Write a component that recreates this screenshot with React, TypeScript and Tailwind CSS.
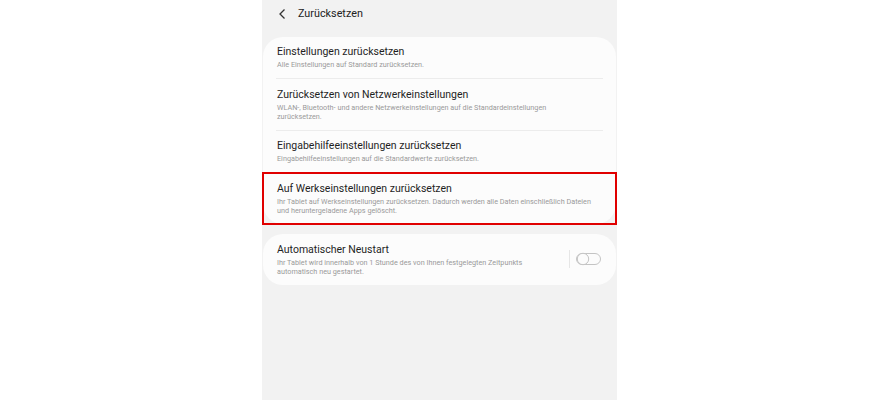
import React from "react";

type Row = { title: string; lines: string[]; highlight?: boolean };

const rows: Row[] = [
  { title: "Einstellungen zurücksetzen", lines: ["Alle Einstellungen auf Standard zurücksetzen."] },
  {
    title: "Zurücksetzen von Netzwerkeinstellungen",
    lines: ["WLAN-, Bluetooth- und andere Netzwerkeinstellungen auf die Standardeinstellungen", "zurücksetzen."],
  },
  { title: "Eingabehilfeeinstellungen zurücksetzen", lines: ["Eingabehilfeeinstellungen auf die Standardwerte zurücksetzen."] },
  {
    title: "Auf Werkseinstellungen zurücksetzen",
    lines: [
      "Ihr Tablet auf Werkseinstellungen zurücksetzen. Dadurch werden alle Daten einschließlich Dateien",
      "und heruntergeladene Apps gelöscht.",
    ],
    highlight: true,
  },
];

function Texts({ title, lines }: { title: string; lines: string[] }) {
  return (
    <>
      <div className="text-[10.5px] leading-[16px] text-[#1f1f1f] whitespace-nowrap">{title}</div>
      <div className="text-[7.25px] leading-[9px] text-[#9a9a9a]">
        {lines.map((l) => (
          <div key={l} className="whitespace-nowrap">
            {l}
          </div>
        ))}
      </div>
    </>
  );
}

export default function App() {
  return (
    <div className="w-full h-[400px] bg-white flex justify-center font-['Roboto',sans-serif]">
      <div className="w-[355px] h-[400px] bg-[#f2f2f2] px-px">
        <div className="h-[28px] flex items-center pl-[15px] gap-[10px]">
          <svg width="10" height="12" viewBox="0 0 10 12" className="text-[#333]">
            <path d="M6.5 1.5 L2 6 L6.5 10.5" fill="none" stroke="currentColor" strokeWidth="1.3" />
          </svg>
          <span className="text-[10.8px] text-[#222]">Zurücksetzen</span>
        </div>

        <div className="mt-[9px] bg-[#fcfcfc] rounded-[20px]">
          {rows.map((r, i) => (
            <div key={r.title}>
              {i > 0 && <div className="mx-[13px] h-px bg-[#ececec]" />}
              <div className={`relative px-[14px] pb-[9px] ${i % 2 === 0 ? "pt-[7px]" : "pt-[8px]"}`}>
                <Texts title={r.title} lines={r.lines} />
                {r.highlight && (
                  <div className="absolute -top-px -bottom-px -left-px -right-px border-2 border-[#e00000]" />
                )}
              </div>
            </div>
          ))}
        </div>

        <div className="mt-[10px] bg-[#fcfcfc] rounded-[20px] flex items-center pl-[14px] pr-[15px] pt-[8px] pb-[9px]">
          <div className="flex-1">
            <Texts
              title="Automatischer Neustart"
              lines={["Ihr Tablet wird innerhalb von 1 Stunde des von Ihnen festgelegten Zeitpunkts", "automatisch neu gestartet."]}
            />
          </div>
          <div className="w-px h-[18px] bg-[#e6e6e6] mr-[6px]" />
          <svg width="25" height="14" viewBox="0 0 25 14">
            <rect x="0.5" y="1.5" width="24" height="11" rx="5.5" fill="none" stroke="#c4c4c4" strokeWidth="1" />
            <circle cx="7" cy="7" r="5.7" fill="#fcfcfc" stroke="#c4c4c4" strokeWidth="1" />
          </svg>
        </div>
      </div>
    </div>
  );
}
